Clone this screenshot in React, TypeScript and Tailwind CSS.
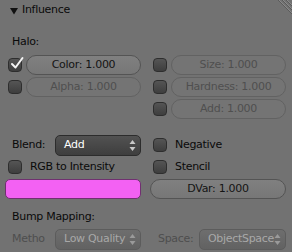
import React from 'react'

const font = { fontFamily: '"DejaVu Sans", "Liberation Sans", sans-serif' }

function Check({ checked = false }: { checked?: boolean }) {
  return (
    <div className="relative w-[14px] h-[14px] shrink-0 rounded-[4px] border border-[#2e2e2e] bg-gradient-to-b from-[#555555] to-[#3e3e3e]">
      {checked && (
        <svg className="absolute -top-[3px] left-[1px]" width="14" height="14" viewBox="0 0 14 14">
          <path d="M2 8 L5.5 11.5 L12.5 2" fill="none" stroke="#f4f4f4" strokeWidth="2" strokeLinecap="round" strokeLinejoin="round" />
        </svg>
      )}
    </div>
  )
}

function NumField({ label, dim = false }: { label: string; dim?: boolean }) {
  return (
    <div
      className={`flex-1 h-[20px] rounded-full border flex items-center justify-center whitespace-nowrap ${
        dim
          ? 'border-[#626262] bg-[#747474] text-[#4f4f4f]'
          : 'border-[#545454] bg-gradient-to-b from-[#808080] to-[#777777] text-[#141414]'
      }`}
    >
      {label}
    </div>
  )
}

function Arrows({ color }: { color: string }) {
  return (
    <svg width="7" height="13" viewBox="0 0 7 13">
      <path d="M3.5 1 L6.5 5 L0.5 5 Z" fill={color} />
      <path d="M3.5 12 L6.5 8 L0.5 8 Z" fill={color} />
    </svg>
  )
}

function Menu({ label, dim = false }: { label: string; dim?: boolean }) {
  return (
    <div
      className={`flex-1 h-[21px] rounded-[5px] border flex items-center justify-between pl-[8px] pr-[4px] whitespace-nowrap ${
        dim
          ? 'border-[#5c5c5c] bg-gradient-to-b from-[#6e6e6e] to-[#626262] text-[#a8a8a8]'
          : 'border-[#2c2c2c] bg-gradient-to-b from-[#525252] to-[#3e3e3e] text-white'
      }`}
    >
      <span>{label}</span>
      <Arrows color={dim ? '#9a9a9a' : '#c8c8c8'} />
    </div>
  )
}

function CheckRow({ checked, label, field, dim }: { checked?: boolean; label: string; field?: boolean; dim?: boolean }) {
  return (
    <div className="flex items-center h-[20px] pl-[3px]">
      <Check checked={checked} />
      {field ? (
        <div className="flex-1 flex ml-[4px]">
          <NumField label={label} dim={dim} />
        </div>
      ) : (
        <span className="ml-[8px] text-[#0a0a0a] whitespace-nowrap">{label}</span>
      )}
    </div>
  )
}

export default function App() {
  return (
    <div className="relative w-[292px] h-[252px] bg-[#727272] text-[11px] tracking-[-0.3px] overflow-hidden" style={font}>
      <svg className="absolute top-0 right-0" width="18" height="16" viewBox="0 0 18 16">
        {[0, 4, 8].map((o) => (
          <path key={o} d={`M${4 + o} 0 L18 ${14 - o}`} stroke="#5a5a5a" strokeWidth="1" />
        ))}
        {[0, 4, 8].map((o) => (
          <path key={'l' + o} d={`M${5 + o} 0 L18 ${13 - o}`} stroke="#8a8a8a" strokeWidth="1" />
        ))}
      </svg>

      <div className="h-[21px] flex items-center pl-[10px] gap-[4px] text-[#0a0a0a]">
        <svg width="8" height="8" viewBox="0 0 8 8">
          <path d="M0 1 L8 1 L4 7.5 Z" fill="#111" />
        </svg>
        <span>Influence</span>
      </div>

      <div className="h-[20px] mt-[11px] flex items-center pl-[12px] text-[#0a0a0a]">Halo:</div>

      <div className="grid grid-cols-2 gap-x-[9px] gap-y-[2px] pl-[5px] pr-[6px] mt-[3px]">
        <CheckRow checked label="Color: 1.000" field />
        <CheckRow label="Size: 1.000" field dim />
        <CheckRow label="Alpha: 1.000" field dim />
        <CheckRow label="Hardness: 1.000" field dim />
        <div />
        <CheckRow label="Add: 1.000" field dim />
      </div>

      <div className="grid grid-cols-2 gap-x-[9px] gap-y-[2px] pl-[5px] pr-[6px] mt-[16px]">
        <div className="flex items-center h-[20px]">
          <span className="w-[50px] pl-[7px] text-[#0a0a0a]">Blend:</span>
          <Menu label="Add" />
        </div>
        <CheckRow label="Negative" />
        <CheckRow label="RGB to Intensity" />
        <CheckRow label="Stencil" />
        <div className="h-[20px] rounded-[5px] border border-[#703070] bg-[#f361f3]" />
        <div className="flex">
          <NumField label="DVar: 1.000" />
        </div>
      </div>

      <div className="h-[20px] mt-[8px] flex items-center pl-[12px] text-[#0a0a0a]">Bump Mapping:</div>

      <div className="grid grid-cols-2 gap-x-[9px] pl-[5px] pr-[6px] mt-[2px]">
        <div className="flex items-center">
          <span className="w-[50px] pl-[7px] text-[#4e4e4e]">Metho</span>
          <Menu label="Low Quality" dim />
        </div>
        <div className="flex items-center">
          <span className="w-[50px] pl-[8px] text-[#4e4e4e]">Space:</span>
          <Menu label="ObjectSpace" dim />
        </div>
      </div>
    </div>
  )
}
